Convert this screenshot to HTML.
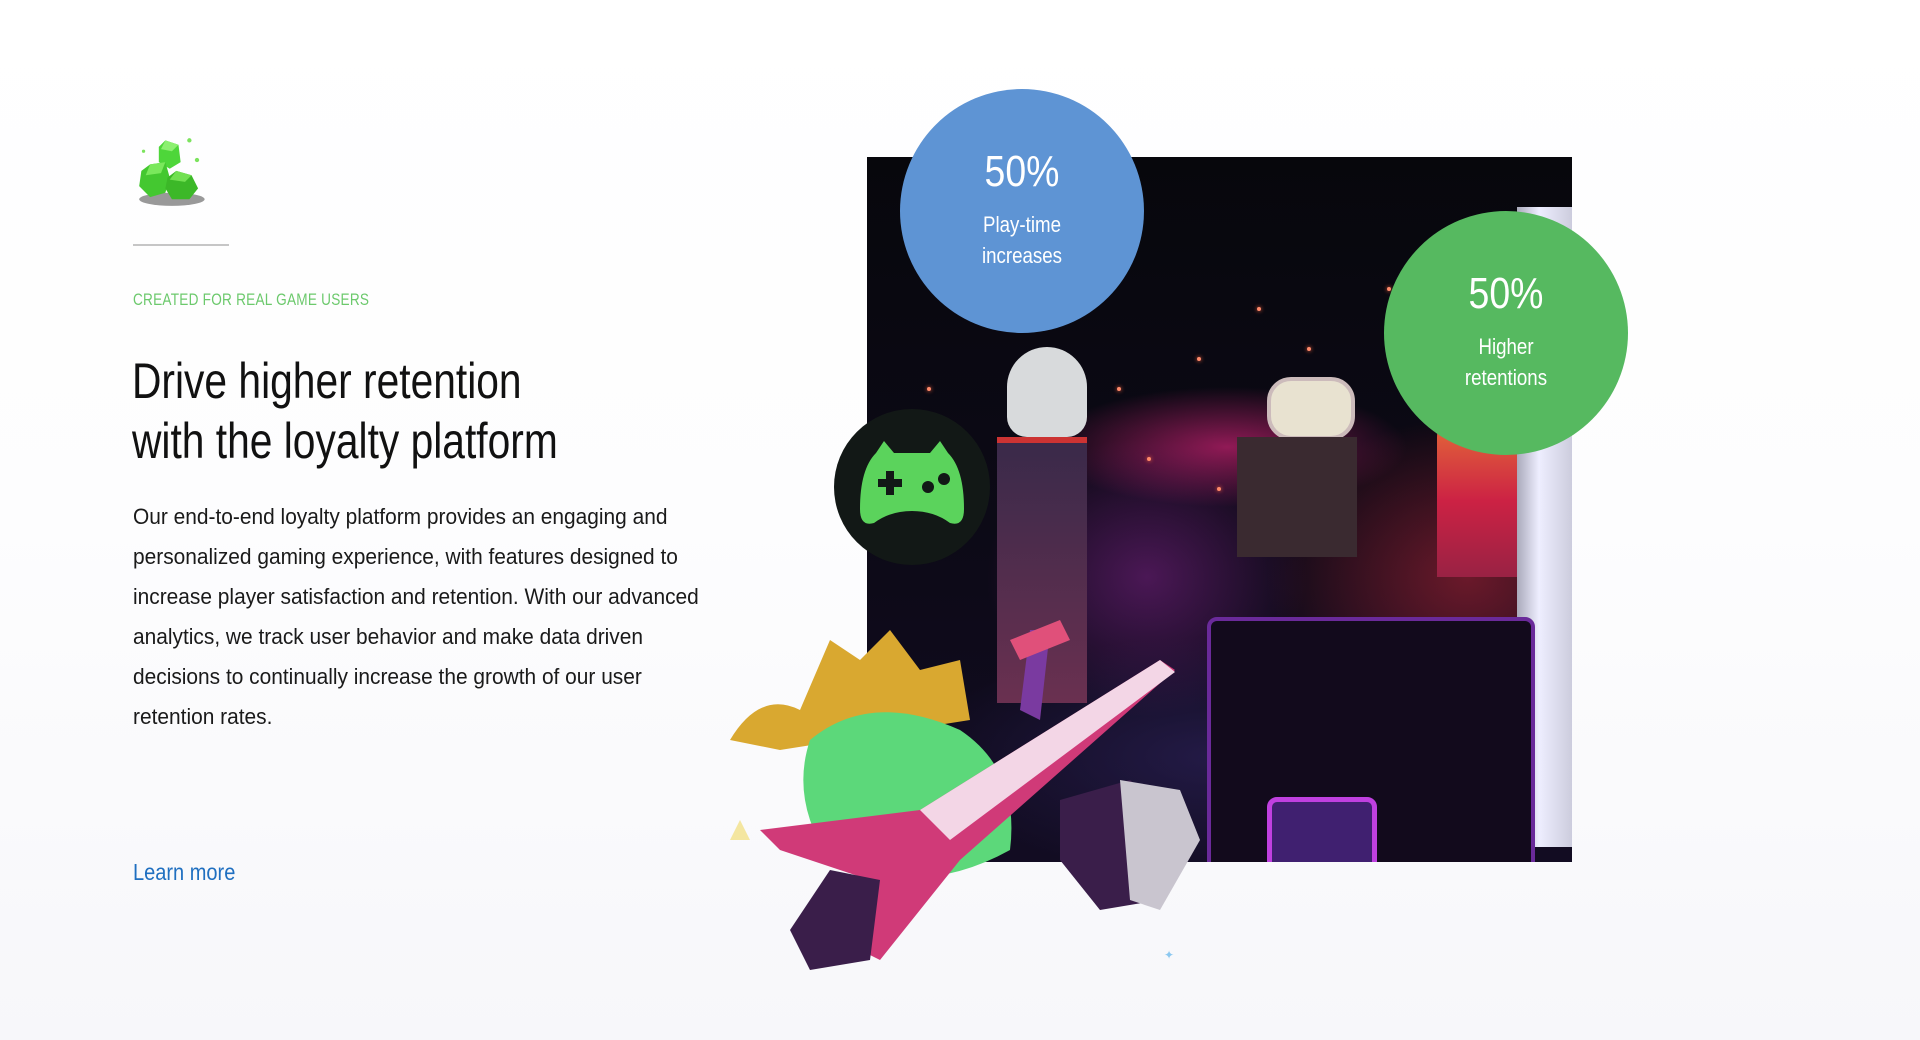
<!DOCTYPE html>
<html><head><meta charset="utf-8"><style>
html,body{margin:0;padding:0}
body{width:1920px;height:1040px;overflow:hidden;position:relative;background:linear-gradient(#ffffff 0%,#fdfdfe 50%,#f7f7fa 100%);font-family:"Liberation Sans",sans-serif}
.a{position:absolute;white-space:nowrap;transform-origin:0 50%}
.cap{left:133px;top:290px;font-size:17px;color:#6cc96c;transform:scaleX(.8);letter-spacing:.3px}
.h{left:132px;font-size:50px;color:#111;transform:scaleX(.815);line-height:60px}
.p{left:133px;font-size:22px;color:#1a1a1a;transform:scaleX(.95);line-height:30px}
.lm{left:133px;top:859px;font-size:23px;color:#1f6fc0;transform:scaleX(.87)}
.c{position:absolute;border-radius:50%;color:#fff;text-align:center}
.c .n{position:absolute;left:0;right:0;font-size:44px;transform:scaleX(.85)}
.c .t{position:absolute;left:0;right:0;font-size:22px;line-height:31px;transform:scaleX(.85)}
.d{position:absolute;width:4px;height:4px;border-radius:50%;background:#ff8a6a;box-shadow:0 0 4px #f64}
</style></head><body>
<svg class="a" style="left:133px;top:136px" width="80" height="72" viewBox="0 0 70 66">
<ellipse cx="34" cy="58" rx="30" ry="6" fill="#333" opacity=".5"/>
<polygon points="28,4 40,8 42,24 32,30 22,24 22,10" fill="#4ed63a"/>
<polygon points="28,4 40,8 34,14 24,12" fill="#8cf070"/>
<polygon points="14,26 28,24 32,38 28,52 14,56 4,46 6,32" fill="#44c830"/>
<polygon points="14,26 28,24 24,34 10,36" fill="#7ae85c"/>
<polygon points="38,32 52,36 58,48 50,58 34,58 28,48 30,38" fill="#3cb828"/>
<polygon points="38,32 52,36 46,42 32,40" fill="#72e052"/>
<circle cx="50" cy="4" r="2" fill="#7ce35e"/><circle cx="57" cy="22" r="2" fill="#7ce35e"/><circle cx="8" cy="14" r="1.5" fill="#7ce35e"/>
</svg>
<div class="a" style="left:133px;top:244px;width:96px;height:2px;background:#c6c6c6"></div>
<div class="a cap">CREATED FOR REAL GAME USERS</div>
<div class="a h" style="top:351px">Drive higher retention</div>
<div class="a h" style="top:411px">with the loyalty platform</div>
<div class="a p" style="top:502px">Our end-to-end loyalty platform provides an engaging and</div>
<div class="a p" style="top:542px">personalized gaming experience, with features designed to</div>
<div class="a p" style="top:582px">increase player satisfaction and retention. With our advanced</div>
<div class="a p" style="top:622px">analytics, we track user behavior and make data driven</div>
<div class="a p" style="top:662px">decisions to continually increase the growth of our user</div>
<div class="a p" style="top:702px">retention rates.</div>
<div class="a lm">Learn more</div>

<div style="position:absolute;left:867px;top:157px;width:705px;height:705px;overflow:hidden;background:
radial-gradient(ellipse 180px 60px at 360px 290px,rgba(255,40,140,.55),transparent),
radial-gradient(ellipse 200px 160px at 600px 420px,rgba(200,40,60,.5),transparent),
radial-gradient(ellipse 160px 140px at 280px 420px,rgba(150,40,160,.45),transparent),
radial-gradient(ellipse 300px 120px at 350px 600px,rgba(40,30,80,.8),transparent),
linear-gradient(#07070c,#0d0a18 60%,#120c22)">
<div class="d" style="left:160px;top:260px"></div><div class="d" style="left:250px;top:230px"></div><div class="d" style="left:330px;top:200px"></div><div class="d" style="left:390px;top:150px"></div><div class="d" style="left:440px;top:190px"></div><div class="d" style="left:520px;top:130px"></div><div class="d" style="left:280px;top:300px"></div><div class="d" style="left:350px;top:330px"></div><div class="d" style="left:60px;top:230px"></div><div class="d" style="left:100px;top:300px"></div><div class="d" style="left:470px;top:260px"></div><div class="d" style="left:560px;top:220px"></div><div class="d" style="left:410px;top:310px"></div>
<div style="position:absolute;left:140px;top:190px;width:80px;height:90px;border-radius:40px 40px 20px 20px;background:#d8dadc"></div>
<div style="position:absolute;left:130px;top:280px;width:90px;height:260px;background:linear-gradient(#3a2a4a,#6a3050);border-top:6px solid #c33"></div>
<div style="position:absolute;left:400px;top:220px;width:80px;height:55px;border-radius:24px;border:4px solid #cbb;background:#e8e2d0"></div>
<div style="position:absolute;left:370px;top:280px;width:120px;height:120px;background:#3a2a30"></div>
<div style="position:absolute;left:570px;top:230px;width:100px;height:190px;border-radius:50px 0 0 0;background:linear-gradient(#e83,#c24 60%,#924)"></div>
<div style="position:absolute;left:650px;top:50px;width:55px;height:640px;background:linear-gradient(90deg,#aab,#eef 40%,#ccd)"></div>
<div style="position:absolute;left:340px;top:460px;width:320px;height:260px;border:4px solid #6a2a9a;border-radius:10px;background:#120a1c"></div>
<div style="position:absolute;left:400px;top:640px;width:100px;height:70px;border:5px solid #c040e0;border-radius:10px;background:#402070"></div>
</div>
<div class="c" style="left:900px;top:89px;width:244px;height:244px;background:#5e94d4">
<div class="n" style="top:58px">50%</div>
<div class="t" style="top:120px">Play-time<br>increases</div></div>
<div class="c" style="left:1384px;top:211px;width:244px;height:244px;background:#56b960">
<div class="n" style="top:58px">50%</div>
<div class="t" style="top:120px">Higher<br>retentions</div></div>
<div class="c" style="left:834px;top:409px;width:156px;height:156px;background:#121816">
<svg style="position:absolute;left:20px;top:30px" width="116" height="92" viewBox="0 0 116 92">
<path d="M22 14 L30 2 L40 14 L76 14 L86 2 L94 14 Q110 30 110 70 Q110 88 96 84 Q80 72 58 72 Q36 72 20 84 Q6 88 6 70 Q6 30 22 14Z" fill="#5bd35c"/>
<rect x="24" y="40" width="24" height="8" fill="#121816"/><rect x="32" y="32" width="8" height="24" fill="#121816"/>
<circle cx="74" cy="48" r="6" fill="#121816"/><circle cx="90" cy="40" r="6" fill="#121816"/></svg></div>
<svg style="position:absolute;left:720px;top:600px" width="520" height="380" viewBox="0 0 520 380">
<path d="M10 140 Q40 90 80 110 L110 40 L140 60 L170 30 L200 70 L240 60 L250 120 L60 150 Z" fill="#d9a830"/>
<path d="M90 140 Q150 90 240 130 Q300 170 290 250 Q200 300 110 260 Q70 200 90 140Z" fill="#5cd87a"/>
<path d="M300 110 L310 30 L330 30 L320 120Z" fill="#7a3aa0"/>
<path d="M290 40 L340 20 L350 40 L300 60Z" fill="#e0507a"/>
<path d="M40 230 L200 210 L440 60 L455 70 L240 260 L160 360 L140 350 L150 280 L60 250Z" fill="#d03a78"/>
<path d="M200 210 L440 60 L455 72 L230 240Z" fill="#f3d6e6"/>
<path d="M70 330 L110 270 L160 280 L150 360 L90 370Z" fill="#3a1e4a"/>
<path d="M340 200 L410 180 L460 220 L440 300 L380 310 L340 260Z" fill="#3a1e4a"/>
<path d="M400 180 L460 190 L480 240 L440 310 L410 300Z" fill="#c9c5cf"/>
<path d="M20 220 L30 240 L10 240Z" fill="#f4e6a0"/>
</svg>
<div style="position:absolute;left:1164px;top:948px;color:#8cc8f0;font-size:12px">✦</div>
</body></html>
